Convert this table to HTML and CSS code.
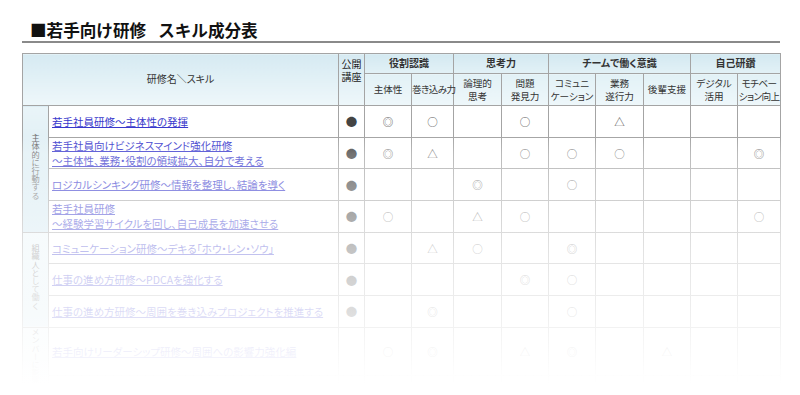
FILE: index.html
```html
<!DOCTYPE html>
<html lang="ja">
<head>
<meta charset="utf-8">
<title>若手向け研修 スキル成分表</title>
<link rel="stylesheet" href="styles.css">
</head>
<body>
<div class="page">
  <h1 class="title">■若手向け研修<span class="gap"></span>スキル成分表</h1>
  <table class="skills">
    <colgroup>
      <col class="c-cat"><col class="c-name"><col class="c-open">
      <col class="c47"><col class="c42"><col class="c48"><col class="c47">
      <col class="c47"><col class="c48"><col class="c47"><col class="c47"><col class="c43">
    </colgroup>
    <thead>
      <tr class="h1row">
        <th class="hd name-h" colspan="2" rowspan="2">研修名＼スキル</th>
        <th class="hd open-h" rowspan="2"><span class="open-txt">公開<br>講座</span></th>
        <th class="hd grp" colspan="2">役割認識</th>
        <th class="hd grp" colspan="2">思考力</th>
        <th class="hd grp" colspan="3">チームで働く意識</th>
        <th class="hd grp" colspan="2">自己研鑽</th>
      </tr>
      <tr class="h2row">
        <th class="hd sub">主体性</th>
        <th class="hd sub tight">巻き込み力</th>
        <th class="hd sub">論理的<br>思考</th>
        <th class="hd sub">問題<br>発見力</th>
        <th class="hd sub">コミュニ<br>ケーション</th>
        <th class="hd sub">業務<br>遂行力</th>
        <th class="hd sub">後輩支援</th>
        <th class="hd sub">デジタル<br>活用</th>
        <th class="hd sub tight">モチベー<br>ション向上</th>
      </tr>
    </thead>
    <tbody>
      <tr>
        <th class="cat" rowspan="4"><span class="vt">主体的に行動する</span></th>
        <td class="name"><a href="#">若手社員研修～主体性の発揮</a></td>
        <td class="m dot">●</td><td class="m">◎</td><td class="m">○</td><td class="m"></td><td class="m">○</td><td class="m"></td><td class="m">△</td><td class="m"></td><td class="m"></td><td class="m"></td>
      </tr>
      <tr>
        <td class="name"><a href="#">若手社員向けビジネスマインド強化研修<br>～主体性、業務・役割の領域拡大、自分で考える</a></td>
        <td class="m dot">●</td><td class="m">◎</td><td class="m">△</td><td class="m"></td><td class="m">○</td><td class="m">○</td><td class="m">○</td><td class="m"></td><td class="m"></td><td class="m">◎</td>
      </tr>
      <tr>
        <td class="name"><a href="#">ロジカルシンキング研修～情報を整理し、結論を導く</a></td>
        <td class="m dot">●</td><td class="m"></td><td class="m"></td><td class="m">◎</td><td class="m"></td><td class="m">○</td><td class="m"></td><td class="m"></td><td class="m"></td><td class="m"></td>
      </tr>
      <tr>
        <td class="name"><a href="#">若手社員研修<br>～経験学習サイクルを回し、自己成長を加速させる</a></td>
        <td class="m dot">●</td><td class="m">○</td><td class="m"></td><td class="m">△</td><td class="m">○</td><td class="m"></td><td class="m"></td><td class="m"></td><td class="m"></td><td class="m">○</td>
      </tr>
      <tr>
        <th class="cat" rowspan="3"><span class="vt">組織人として働く</span></th>
        <td class="name"><a href="#">コミュニケーション研修～デキる「ホウ・レン・ソウ」</a></td>
        <td class="m dot">●</td><td class="m"></td><td class="m">△</td><td class="m">○</td><td class="m"></td><td class="m">◎</td><td class="m"></td><td class="m"></td><td class="m"></td><td class="m"></td>
      </tr>
      <tr>
        <td class="name"><a href="#">仕事の進め方研修～PDCAを強化する</a></td>
        <td class="m dot">●</td><td class="m"></td><td class="m"></td><td class="m"></td><td class="m">◎</td><td class="m">○</td><td class="m"></td><td class="m"></td><td class="m"></td><td class="m"></td>
      </tr>
      <tr>
        <td class="name"><a href="#">仕事の進め方研修～周囲を巻き込みプロジェクトを推進する</a></td>
        <td class="m dot">●</td><td class="m"></td><td class="m">◎</td><td class="m"></td><td class="m"></td><td class="m">○</td><td class="m"></td><td class="m"></td><td class="m"></td><td class="m"></td>
      </tr>
      <tr>
        <th class="cat" rowspan="2"><span class="vt">メンバーに影響を与える</span></th>
        <td class="name"><a href="#">若手向けリーダーシップ研修～周囲への影響力強化編</a></td>
        <td class="m dot"></td><td class="m">○</td><td class="m">◎</td><td class="m"></td><td class="m">△</td><td class="m">◎</td><td class="m"></td><td class="m">△</td><td class="m"></td><td class="m"></td>
      </tr>
      <tr>
        <td class="name"><a href="#">後輩サポート力研修～頼られる先輩としてのフォローの仕方</a></td>
        <td class="m dot">●</td><td class="m"></td><td class="m"></td><td class="m"></td><td class="m"></td><td class="m">○</td><td class="m"></td><td class="m">△</td><td class="m"></td><td class="m"></td>
      </tr>
    </tbody>
  </table>
  <div class="fade"></div>
</div>
</body>
</html>
```

FILE: styles.css
```css
html, body {
  margin: 0;
  padding: 0;
  height: 395px;
  overflow: hidden;
  background: #fff;
}
body {
  font-family: "Noto Sans CJK JP", "Noto Sans", sans-serif;
  color: #333;
}
.page {
  position: relative;
  padding: 0 20px 0 22px;
  height: 395px;
}
.title {
  margin: 0;
  padding: 19px 0 0 8px;
  height: 22px;
  line-height: 22px;
  font-size: 16.6px;
  font-weight: bold;
  color: #111;
  border-bottom: 2px solid #8a8a8a;
  letter-spacing: 0;
}
.gap {
  display: inline-block;
  width: 12px;
}
.skills {
  margin-top: 10px;
  width: 758px;
  table-layout: fixed;
  border-collapse: collapse;
  border: 1px solid #8f8f8f;
  font-feature-settings: "palt";
}
.c-cat { width: 26px; }
.c-name { width: 290px; }
.c-open { width: 26px; }
.c42 { width: 42px; }
.c43 { width: 43px; }
.c47 { width: 47px; }
.c48 { width: 48px; }
.skills th, .skills td {
  border: 1px solid #a4a4a4;
  padding: 0;
}
.hd {
  background: linear-gradient(to bottom, #d6eaf2, #eef7fa);
  color: #333;
  font-size: 9.6px;
  font-weight: normal;
  line-height: 12.5px;
  text-align: center;
  vertical-align: middle;
}
.h1row { height: 20px; }
.h2row { height: 32px; }
.grp {
  font-weight: bold;
  font-size: 10px;
  background: linear-gradient(to bottom, #d4e9f1, #e2f1f6);
}
.name-h { font-size: 10px; padding-top: 2px; }
.open-txt {
  display: inline-block;
  margin-bottom: 19px;
  font-weight: normal;
  font-size: 10px;
  line-height: 13.5px;
  color: #222;
}
.sub { background: linear-gradient(to bottom, #e2f1f6, #eef7fa); }
.tight { letter-spacing: -0.6px; white-space: nowrap; }
.skills tbody tr { height: 31.7px; }
.cat {
  background: linear-gradient(to bottom, #e9f4f8, #cfe6ef);
  vertical-align: middle;
  text-align: center;
  font-weight: normal;
}
.vt {
  writing-mode: vertical-rl;
  font-size: 8.2px;
  line-height: 10px;
  color: #666;
  display: inline-block;
}
.name {
  padding: 0 0 0 3px !important;
  font-size: 10.5px;
  line-height: 15px;
  vertical-align: middle;
}
.name a {
  color: #3838cc;
  text-decoration: underline;
}
.m {
  text-align: center;
  vertical-align: middle;
  font-size: 10.5px;
  color: #555;
  font-feature-settings: normal;
}
.dot {
  color: #444;
  font-size: 11.5px;
}
.fade {
  position: absolute;
  left: 0;
  top: 0;
  width: 100%;
  height: 395px;
  pointer-events: none;
  background: linear-gradient(to bottom,
    rgba(255,255,255,0) 0px,
    rgba(255,255,255,0) 136px,
    rgba(255,255,255,0.25) 154px,
    rgba(255,255,255,0.42) 186px,
    rgba(255,255,255,0.55) 217px,
    rgba(255,255,255,0.68) 249px,
    rgba(255,255,255,0.76) 280px,
    rgba(255,255,255,0.82) 312px,
    rgba(255,255,255,0.9) 343px,
    rgba(255,255,255,0.98) 372px,
    rgba(255,255,255,1) 385px);
}
```
